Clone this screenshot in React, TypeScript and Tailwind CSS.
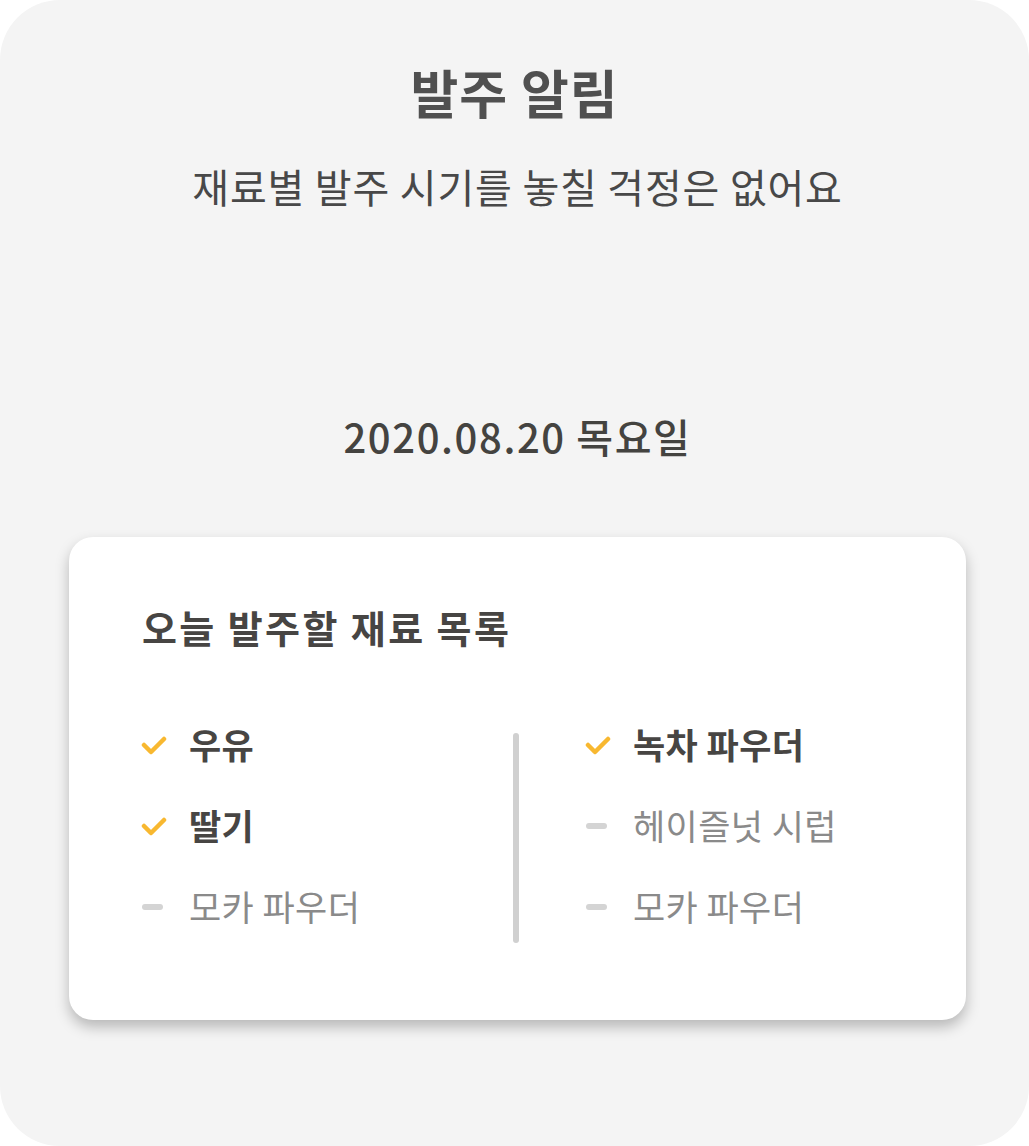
import React from "react";

const font = { fontFamily: '"Noto Sans CJK KR", "Noto Sans", sans-serif' };

const Check = () => (
  <svg width="26" height="22" viewBox="0 0 26 22" className="shrink-0">
    <polyline
      points="3,11 10,18 23,5"
      fill="none"
      stroke="#f8b830"
      strokeWidth="4.5"
      strokeLinecap="round"
      strokeLinejoin="round"
    />
  </svg>
);

const Dash = () => (
  <div className="w-[26px] flex items-center shrink-0">
    <div className="ml-[1px] h-[6px] w-[21px] rounded-full bg-[#d4d4d4]" />
  </div>
);

type Item = { name: string; done: boolean };

const Row = ({ item }: { item: Item }) => (
  <div className="flex items-center h-[81px]">
    {item.done ? <Check /> : <Dash />}
    <span
      className={
        item.done
          ? "ml-[22px] text-[35px] font-bold text-[#474543] tracking-[0.4px]"
          : "ml-[22px] text-[35px] font-normal text-[#8a8a8a] tracking-[0.4px]"
      }
    >
      {item.name}
    </span>
  </div>
);

const left: Item[] = [
  { name: "우유", done: true },
  { name: "딸기", done: true },
  { name: "모카 파우더", done: false },
];

const right: Item[] = [
  { name: "녹차 파우더", done: true },
  { name: "헤이즐넛 시럽", done: false },
  { name: "모카 파우더", done: false },
];

export default function App() {
  return (
    <div className="w-[1029px] h-[1146px] bg-white" style={font}>
      <div className="w-[1029px] h-[1146px] rounded-[60px] bg-[#f4f4f4] flex flex-col items-center">
        <h1 className="mt-[66px] text-[52px] leading-[52px] font-bold text-[#505050] tracking-[1px]">
          발주 알림
        </h1>
        <p className="mt-[48px] ml-[6px] text-[40px] leading-[40px] text-[#484848] tracking-[0.8px]">
          재료별 발주 시기를 놓칠 걱정은 없어요
        </p>
        <p className="mt-[210px] ml-[6px] text-[40px] leading-[40px] font-medium text-[#444340] tracking-[1.6px]">
          2020.08.20 목요일
        </p>
        <div className="mt-[81px] ml-[6px] w-[897px] h-[483px] rounded-[24px] bg-white shadow-[0_7px_14px_rgba(0,0,0,0.25)] px-[72px] pt-[71px]">
          <h2 className="ml-[1px] text-[38px] leading-[38px] font-bold text-[#474543] tracking-[2.4px]">
            오늘 발주할 재료 목록
          </h2>
          <div className="mt-[58px] flex">
            <div className="w-[372px]">
              {left.map((it) => (
                <Row key={it.name} item={it} />
              ))}
            </div>
            <div className="mt-[29px] w-[6px] h-[210px] rounded-full bg-[#d0d0d0]" />
            <div className="pl-[66px]">
              {right.map((it) => (
                <Row key={it.name} item={it} />
              ))}
            </div>
          </div>
        </div>
      </div>
    </div>
  );
}
